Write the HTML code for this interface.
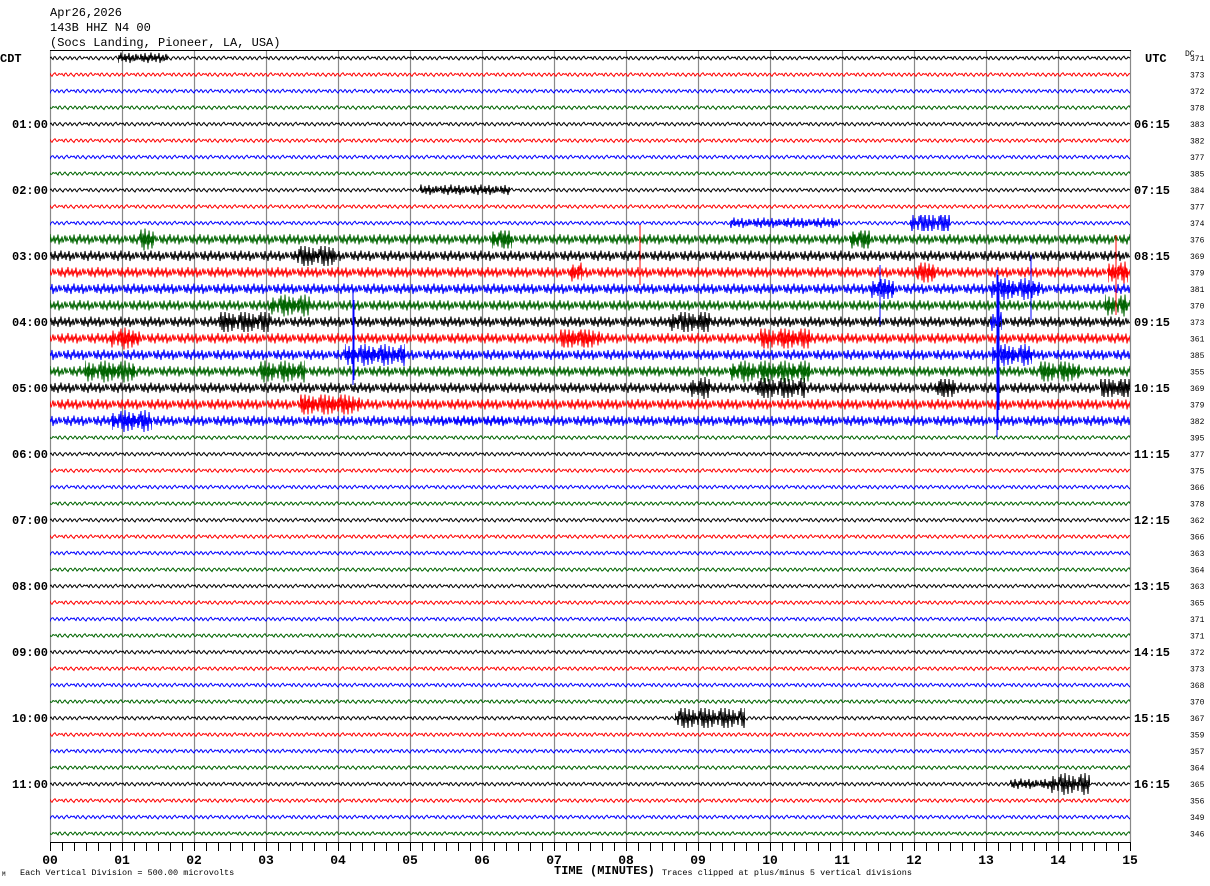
<!DOCTYPE html>
<html><head><meta charset="utf-8"><style>
html,body{margin:0;padding:0;background:#fff;width:1210px;height:886px;overflow:hidden}
svg{display:block}
text{font-family:"Liberation Mono","DejaVu Sans Mono",monospace}
.lb{font-size:12px;font-weight:bold}
.dc{font-size:8px}
</style></head><body>
<svg width="1210" height="886" viewBox="0 0 1210 886" xmlns="http://www.w3.org/2000/svg">
<defs>
<path id="cw" d="M0 4 L1 3 L2 4.5 L3 5.5 L4 3 L5 2.5 L6 4 L7 5.5 L8 5 L9 3.5 L10 2.5 L11 4 L12 5 L13 6 L14 4 L15 3 L16 2.8 L17 4.2 L18 5.2 L19 4 L20 2.5 L21 3.5 L22 5.5 L23 4.5 L24 3.2 L25 3 L26 4.8 L27 5.8 L28 4 L29 3 L30 2.2 L31 4 L32 5 L33 4.5 L34 3 L35 3.5 L36 4"/>
<path id="nw" d="M0 7 L1 3 L2 10 L3 5 L4 11 L5 2 L6 9 L7 6 L8 12 L9 4 L10 8 L11 1.5 L12 10 L13 6 L14 9 L15 3 L16 11 L17 5 L18 8 L19 2 L20 12 L21 6 L22 9 L23 4 L24 10 L25 7 L26 3 L27 9 L28 5 L29 8 L30 7"/>
<path id="bw" d="M0 12 L1 2 L2 20 L3 6 L4 23 L5 1 L6 17 L7 8 L8 22 L9 3 L10 15 L11 9 L12 21 L13 4 L14 18 L15 7 L16 14 L17 10 L18 19 L19 5 L20 12"/>
<pattern id="ck" patternUnits="userSpaceOnUse" x="50" y="-4" width="36" height="8"><use href="#cw" fill="none" stroke="#000" stroke-width="1"/></pattern>
<pattern id="cr" patternUnits="userSpaceOnUse" x="61" y="-4" width="36" height="8"><use href="#cw" fill="none" stroke="#f00" stroke-width="1"/></pattern>
<pattern id="cb" patternUnits="userSpaceOnUse" x="73" y="-4" width="36" height="8"><use href="#cw" fill="none" stroke="#00f" stroke-width="1"/></pattern>
<pattern id="cg" patternUnits="userSpaceOnUse" x="55" y="-4" width="36" height="8"><use href="#cw" fill="none" stroke="#006400" stroke-width="1"/></pattern>
<pattern id="nk" patternUnits="userSpaceOnUse" x="50" y="-7" width="30" height="14"><use href="#nw" fill="none" stroke="#000" stroke-width="1"/></pattern>
<pattern id="nr" patternUnits="userSpaceOnUse" x="57" y="-7" width="30" height="14"><use href="#nw" fill="none" stroke="#f00" stroke-width="1"/></pattern>
<pattern id="nb" patternUnits="userSpaceOnUse" x="63" y="-7" width="30" height="14"><use href="#nw" fill="none" stroke="#00f" stroke-width="1"/></pattern>
<pattern id="ng" patternUnits="userSpaceOnUse" x="69" y="-7" width="30" height="14"><use href="#nw" fill="none" stroke="#006400" stroke-width="1"/></pattern>
<pattern id="bk" patternUnits="userSpaceOnUse" x="0" y="-12" width="20" height="24"><use href="#bw" fill="none" stroke="#000" stroke-width="1"/></pattern>
<pattern id="br" patternUnits="userSpaceOnUse" x="0" y="-12" width="20" height="24"><use href="#bw" fill="none" stroke="#f00" stroke-width="1"/></pattern>
<pattern id="bb" patternUnits="userSpaceOnUse" x="0" y="-12" width="20" height="24"><use href="#bw" fill="none" stroke="#00f" stroke-width="1"/></pattern>
<pattern id="bg" patternUnits="userSpaceOnUse" x="0" y="-12" width="20" height="24"><use href="#bw" fill="none" stroke="#006400" stroke-width="1"/></pattern>
</defs>

<text x="50" y="16" class="lb" style="font-weight:normal;font-size:12px">Apr26,2026</text>
<text x="50" y="31" style="font-size:12px">143B HHZ N4 00</text>
<text x="50" y="46" style="font-size:12px">(Socs Landing, Pioneer, LA, USA)</text>

<!-- grid -->
<g stroke="#888" stroke-width="1.2">
<line x1="50.5" y1="50" x2="50.5" y2="842"/><line x1="122.5" y1="50" x2="122.5" y2="842"/><line x1="194.5" y1="50" x2="194.5" y2="842"/><line x1="266.5" y1="50" x2="266.5" y2="842"/><line x1="338.5" y1="50" x2="338.5" y2="842"/><line x1="410.5" y1="50" x2="410.5" y2="842"/><line x1="482.5" y1="50" x2="482.5" y2="842"/><line x1="554.5" y1="50" x2="554.5" y2="842"/><line x1="626.5" y1="50" x2="626.5" y2="842"/><line x1="698.5" y1="50" x2="698.5" y2="842"/><line x1="770.5" y1="50" x2="770.5" y2="842"/><line x1="842.5" y1="50" x2="842.5" y2="842"/><line x1="914.5" y1="50" x2="914.5" y2="842"/><line x1="986.5" y1="50" x2="986.5" y2="842"/><line x1="1058.5" y1="50" x2="1058.5" y2="842"/><line x1="1130.5" y1="50" x2="1130.5" y2="842"/>
</g>
<line x1="50" y1="50.5" x2="1131" y2="50.5" stroke="#000"/>

<!-- traces -->
<g>
<g transform="translate(0,58)"><rect x="50" y="-4" width="1080" height="8" fill="url(#ck)"/></g>
<g transform="translate(0,74.5)"><rect x="50" y="-4" width="1080" height="8" fill="url(#cr)"/></g>
<g transform="translate(0,91)"><rect x="50" y="-4" width="1080" height="8" fill="url(#cb)"/></g>
<g transform="translate(0,107.5)"><rect x="50" y="-4" width="1080" height="8" fill="url(#cg)"/></g>
<g transform="translate(0,124)"><rect x="50" y="-4" width="1080" height="8" fill="url(#ck)"/></g>
<g transform="translate(0,140.5)"><rect x="50" y="-4" width="1080" height="8" fill="url(#cr)"/></g>
<g transform="translate(0,157)"><rect x="50" y="-4" width="1080" height="8" fill="url(#cb)"/></g>
<g transform="translate(0,173.5)"><rect x="50" y="-4" width="1080" height="8" fill="url(#cg)"/></g>
<g transform="translate(0,190)"><rect x="50" y="-4" width="1080" height="8" fill="url(#ck)"/></g>
<g transform="translate(0,206.5)"><rect x="50" y="-4" width="1080" height="8" fill="url(#cr)"/></g>
<g transform="translate(0,223)"><rect x="50" y="-4" width="1080" height="8" fill="url(#cb)"/></g>
<g transform="translate(0,239.5)"><rect x="50" y="-7" width="1080" height="14" fill="url(#ng)"/></g>
<g transform="translate(0,256)"><rect x="50" y="-7" width="1080" height="14" fill="url(#nk)"/></g>
<g transform="translate(0,272.5)"><rect x="50" y="-7" width="1080" height="14" fill="url(#nr)"/></g>
<g transform="translate(0,289)"><rect x="50" y="-7" width="1080" height="14" fill="url(#nb)"/></g>
<g transform="translate(0,305.5)"><rect x="50" y="-7" width="1080" height="14" fill="url(#ng)"/></g>
<g transform="translate(0,322)"><rect x="50" y="-7" width="1080" height="14" fill="url(#nk)"/></g>
<g transform="translate(0,338.5)"><rect x="50" y="-7" width="1080" height="14" fill="url(#nr)"/></g>
<g transform="translate(0,355)"><rect x="50" y="-7" width="1080" height="14" fill="url(#nb)"/></g>
<g transform="translate(0,371.5)"><rect x="50" y="-7" width="1080" height="14" fill="url(#ng)"/></g>
<g transform="translate(0,388)"><rect x="50" y="-7" width="1080" height="14" fill="url(#nk)"/></g>
<g transform="translate(0,404.5)"><rect x="50" y="-7" width="1080" height="14" fill="url(#nr)"/></g>
<g transform="translate(0,421)"><rect x="50" y="-7" width="1080" height="14" fill="url(#nb)"/></g>
<g transform="translate(0,437.5)"><rect x="50" y="-4" width="1080" height="8" fill="url(#cg)"/></g>
<g transform="translate(0,454)"><rect x="50" y="-4" width="1080" height="8" fill="url(#ck)"/></g>
<g transform="translate(0,470.5)"><rect x="50" y="-4" width="1080" height="8" fill="url(#cr)"/></g>
<g transform="translate(0,487)"><rect x="50" y="-4" width="1080" height="8" fill="url(#cb)"/></g>
<g transform="translate(0,503.5)"><rect x="50" y="-4" width="1080" height="8" fill="url(#cg)"/></g>
<g transform="translate(0,520)"><rect x="50" y="-4" width="1080" height="8" fill="url(#ck)"/></g>
<g transform="translate(0,536.5)"><rect x="50" y="-4" width="1080" height="8" fill="url(#cr)"/></g>
<g transform="translate(0,553)"><rect x="50" y="-4" width="1080" height="8" fill="url(#cb)"/></g>
<g transform="translate(0,569.5)"><rect x="50" y="-4" width="1080" height="8" fill="url(#cg)"/></g>
<g transform="translate(0,586)"><rect x="50" y="-4" width="1080" height="8" fill="url(#ck)"/></g>
<g transform="translate(0,602.5)"><rect x="50" y="-4" width="1080" height="8" fill="url(#cr)"/></g>
<g transform="translate(0,619)"><rect x="50" y="-4" width="1080" height="8" fill="url(#cb)"/></g>
<g transform="translate(0,635.5)"><rect x="50" y="-4" width="1080" height="8" fill="url(#cg)"/></g>
<g transform="translate(0,652)"><rect x="50" y="-4" width="1080" height="8" fill="url(#ck)"/></g>
<g transform="translate(0,668.5)"><rect x="50" y="-4" width="1080" height="8" fill="url(#cr)"/></g>
<g transform="translate(0,685)"><rect x="50" y="-4" width="1080" height="8" fill="url(#cb)"/></g>
<g transform="translate(0,701.5)"><rect x="50" y="-4" width="1080" height="8" fill="url(#cg)"/></g>
<g transform="translate(0,718)"><rect x="50" y="-4" width="1080" height="8" fill="url(#ck)"/></g>
<g transform="translate(0,734.5)"><rect x="50" y="-4" width="1080" height="8" fill="url(#cr)"/></g>
<g transform="translate(0,751)"><rect x="50" y="-4" width="1080" height="8" fill="url(#cb)"/></g>
<g transform="translate(0,767.5)"><rect x="50" y="-4" width="1080" height="8" fill="url(#cg)"/></g>
<g transform="translate(0,784)"><rect x="50" y="-4" width="1080" height="8" fill="url(#ck)"/></g>
<g transform="translate(0,800.5)"><rect x="50" y="-4" width="1080" height="8" fill="url(#cr)"/></g>
<g transform="translate(0,817)"><rect x="50" y="-4" width="1080" height="8" fill="url(#cb)"/></g>
<g transform="translate(0,833.5)"><rect x="50" y="-4" width="1080" height="8" fill="url(#cg)"/></g>
</g>

<!-- bursts -->
<g>
<g transform="translate(0,58)"><rect x="118" y="-7" width="50" height="14" fill="url(#nk)"/></g>
<g transform="translate(0,190)"><rect x="420" y="-6" width="90" height="12" fill="url(#nk)"/></g>
<g transform="translate(0,223)"><rect x="910" y="-8" width="40" height="16" fill="url(#bb)"/><rect x="730" y="-6" width="110" height="12" fill="url(#nb)"/></g>
<g transform="translate(0,239.5)"><rect x="140" y="-12" width="14" height="24" fill="url(#bg)"/><rect x="492" y="-9" width="20" height="18" fill="url(#bg)"/><rect x="850" y="-9" width="20" height="18" fill="url(#bg)"/></g>
<g transform="translate(0,256)"><rect x="295" y="-10" width="40" height="20" fill="url(#bk)"/></g>
<g transform="translate(0,272.5)"><rect x="1108" y="-12" width="20" height="24" fill="url(#br)"/><rect x="570" y="-12" width="12" height="24" fill="url(#br)"/><rect x="915" y="-10" width="20" height="20" fill="url(#br)"/></g>
<g transform="translate(0,289)"><rect x="990" y="-12" width="50" height="24" fill="url(#bb)"/><rect x="870" y="-10" width="24" height="20" fill="url(#bb)"/></g>
<g transform="translate(0,305.5)"><rect x="270" y="-12" width="40" height="24" fill="url(#bg)"/><rect x="1105" y="-12" width="22" height="24" fill="url(#bg)"/></g>
<g transform="translate(0,322)"><rect x="670" y="-10" width="40" height="20" fill="url(#bk)"/><rect x="220" y="-10" width="50" height="20" fill="url(#bk)"/><rect x="990" y="-12" width="12" height="24" fill="url(#bb)"/></g>
<g transform="translate(0,338.5)"><rect x="110" y="-12" width="30" height="24" fill="url(#br)"/><rect x="560" y="-9" width="40" height="18" fill="url(#br)"/><rect x="760" y="-10" width="50" height="20" fill="url(#br)"/></g>
<g transform="translate(0,355)"><rect x="992" y="-12" width="40" height="24" fill="url(#bb)"/><rect x="345" y="-12" width="60" height="24" fill="url(#bb)"/></g>
<g transform="translate(0,371.5)"><rect x="85" y="-12" width="50" height="24" fill="url(#bg)"/><rect x="260" y="-12" width="45" height="24" fill="url(#bg)"/><rect x="730" y="-12" width="80" height="24" fill="url(#bg)"/><rect x="1040" y="-10" width="40" height="20" fill="url(#bg)"/></g>
<g transform="translate(0,388)"><rect x="690" y="-12" width="20" height="24" fill="url(#bk)"/><rect x="755" y="-10" width="50" height="20" fill="url(#bk)"/><rect x="935" y="-9" width="20" height="18" fill="url(#bk)"/><rect x="1100" y="-9" width="30" height="18" fill="url(#bk)"/></g>
<g transform="translate(0,404.5)"><rect x="300" y="-10" width="60" height="20" fill="url(#br)"/></g>
<g transform="translate(0,421)"><rect x="112" y="-12" width="40" height="24" fill="url(#bb)"/><rect x="440" y="-8" width="70" height="16" fill="url(#nb)"/></g>
<g transform="translate(0,718)"><rect x="675" y="-10" width="70" height="20" fill="url(#bk)"/></g>
<g transform="translate(0,784)"><rect x="1010" y="-6" width="40" height="12" fill="url(#nk)"/><rect x="1050" y="-12" width="40" height="24" fill="url(#bk)"/></g>
<path d="M997 270 L997 437 M998 275 L998 430 M999 290 L999 410 M353 290 L353 385 M354 300 L354 380 M1031 255 L1031 320 M1116 235 L1116 315 M640 225 L640 285 M880 265 L880 325" stroke="#00f" stroke-width="1"/>
<path d="M640 225 L640 285 M1116 235 L1116 315" stroke="#f00"/>
</g>

<!-- left labels -->
<g class="lb">
<text x="0" y="62">CDT</text>
<text x="12" y="128">01:00</text><text x="12" y="194">02:00</text><text x="12" y="260">03:00</text><text x="12" y="326">04:00</text><text x="12" y="392">05:00</text><text x="12" y="458">06:00</text><text x="12" y="524">07:00</text><text x="12" y="590">08:00</text><text x="12" y="656">09:00</text><text x="12" y="722">10:00</text><text x="12" y="788">11:00</text>
<text x="1145" y="62">UTC</text>
<text x="1134" y="128">06:15</text><text x="1134" y="194">07:15</text><text x="1134" y="260">08:15</text><text x="1134" y="326">09:15</text><text x="1134" y="392">10:15</text><text x="1134" y="458">11:15</text><text x="1134" y="524">12:15</text><text x="1134" y="590">13:15</text><text x="1134" y="656">14:15</text><text x="1134" y="722">15:15</text><text x="1134" y="788">16:15</text>
</g>
<g class="dc">
<text x="1185" y="56">DC</text>
<text x="1190" y="61">371</text><text x="1190" y="77.5">373</text><text x="1190" y="94">372</text><text x="1190" y="110.5">378</text><text x="1190" y="127">383</text><text x="1190" y="143.5">382</text><text x="1190" y="160">377</text><text x="1190" y="176.5">385</text><text x="1190" y="193">384</text><text x="1190" y="209.5">377</text><text x="1190" y="226">374</text><text x="1190" y="242.5">376</text><text x="1190" y="259">369</text><text x="1190" y="275.5">379</text><text x="1190" y="292">381</text><text x="1190" y="308.5">370</text><text x="1190" y="325">373</text><text x="1190" y="341.5">361</text><text x="1190" y="358">385</text><text x="1190" y="374.5">355</text><text x="1190" y="391">369</text><text x="1190" y="407.5">379</text><text x="1190" y="424">382</text><text x="1190" y="440.5">395</text><text x="1190" y="457">377</text><text x="1190" y="473.5">375</text><text x="1190" y="490">366</text><text x="1190" y="506.5">378</text><text x="1190" y="523">362</text><text x="1190" y="539.5">366</text><text x="1190" y="556">363</text><text x="1190" y="572.5">364</text><text x="1190" y="589">363</text><text x="1190" y="605.5">365</text><text x="1190" y="622">371</text><text x="1190" y="638.5">371</text><text x="1190" y="655">372</text><text x="1190" y="671.5">373</text><text x="1190" y="688">368</text><text x="1190" y="704.5">370</text><text x="1190" y="721">367</text><text x="1190" y="737.5">359</text><text x="1190" y="754">357</text><text x="1190" y="770.5">364</text><text x="1190" y="787">365</text><text x="1190" y="803.5">356</text><text x="1190" y="820">349</text><text x="1190" y="836.5">346</text>
</g>

<!-- axis -->
<line x1="50" y1="842.5" x2="1131" y2="842.5" stroke="#000"/>
<path stroke="#000" stroke-width="1" d="M50.5 842V851M62.5 842V851M74.5 842V851M86.5 842V851M98.5 842V851M110.5 842V851M122.5 842V851M134.5 842V851M146.5 842V851M158.5 842V851M170.5 842V851M182.5 842V851M194.5 842V851M206.5 842V851M218.5 842V851M230.5 842V851M242.5 842V851M254.5 842V851M266.5 842V851M278.5 842V851M290.5 842V851M302.5 842V851M314.5 842V851M326.5 842V851M338.5 842V851M350.5 842V851M362.5 842V851M374.5 842V851M386.5 842V851M398.5 842V851M410.5 842V851M422.5 842V851M434.5 842V851M446.5 842V851M458.5 842V851M470.5 842V851M482.5 842V851M494.5 842V851M506.5 842V851M518.5 842V851M530.5 842V851M542.5 842V851M554.5 842V851M566.5 842V851M578.5 842V851M590.5 842V851M602.5 842V851M614.5 842V851M626.5 842V851M638.5 842V851M650.5 842V851M662.5 842V851M674.5 842V851M686.5 842V851M698.5 842V851M710.5 842V851M722.5 842V851M734.5 842V851M746.5 842V851M758.5 842V851M770.5 842V851M782.5 842V851M794.5 842V851M806.5 842V851M818.5 842V851M830.5 842V851M842.5 842V851M854.5 842V851M866.5 842V851M878.5 842V851M890.5 842V851M902.5 842V851M914.5 842V851M926.5 842V851M938.5 842V851M950.5 842V851M962.5 842V851M974.5 842V851M986.5 842V851M998.5 842V851M1010.5 842V851M1022.5 842V851M1034.5 842V851M1046.5 842V851M1058.5 842V851M1070.5 842V851M1082.5 842V851M1094.5 842V851M1106.5 842V851M1118.5 842V851M1130.5 842V851"/>
<g class="lb" text-anchor="middle" style="font-size:13px">
<text x="50" y="864">00</text><text x="122" y="864">01</text><text x="194" y="864">02</text><text x="266" y="864">03</text><text x="338" y="864">04</text><text x="410" y="864">05</text><text x="482" y="864">06</text><text x="554" y="864">07</text><text x="626" y="864">08</text><text x="698" y="864">09</text><text x="770" y="864">10</text><text x="842" y="864">11</text><text x="914" y="864">12</text><text x="986" y="864">13</text><text x="1058" y="864">14</text><text x="1130" y="864">15</text>
</g>
<text x="2" y="876" style="font-size:6px">M</text>
<text x="20" y="875" style="font-size:8.5px">Each Vertical Division =  500.00 microvolts</text>
<text x="554" y="874" class="lb">TIME (MINUTES)</text>
<text x="662" y="875" style="font-size:8.5px">Traces clipped at plus/minus 5 vertical divisions</text>
</svg>
</body></html>
